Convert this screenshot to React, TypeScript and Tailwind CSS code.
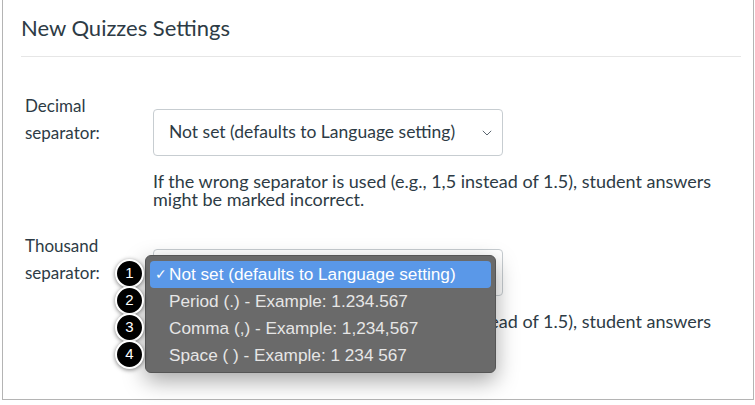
import React from "react";

const Chevron = () => (
  <svg width="10" height="6" viewBox="0 0 10 6" fill="none">
    <path d="M0.8 0.8 L5 5 L9.2 0.8" stroke="#5b6670" strokeWidth="1" />
  </svg>
);

const Select = ({ text }: { text: string }) => (
  <div className="flex h-[47px] w-[350px] items-center justify-between rounded-[4px] border border-[#c7cdd1] bg-white pl-[15px] pr-[10px]">
    <span className="text-[17.5px] text-[#2d3b45]">{text}</span>
    <Chevron />
  </div>
);

const Row = ({ first, second, mt }: { first: string; second: string; mt: string }) => (
  <div className={mt}>
    <div className="flex">
      <div className="w-[132px] pl-[4px] text-[17px] leading-[27px] text-[#2d3b45]">
        <div>{first}</div>
        <div>{second}</div>
      </div>
      <div className="pt-[17px]">
        <Select text="Not set (defaults to Language setting)" />
        <p className="mt-[16px] whitespace-nowrap text-[18px] leading-[18px] text-[#2d3b45]">
          If the wrong separator is used (e.g., 1,5 instead of 1.5), student answers
          <br />
          might be marked incorrect.
        </p>
      </div>
    </div>
  </div>
);

const items = [
  "Not set (defaults to Language setting)",
  "Period (.) - Example: 1.234.567",
  "Comma (,) - Example: 1,234,567",
  "Space ( ) - Example: 1 234 567",
];

export default function App() {
  return (
    <div className="relative h-[405px] w-[755px] overflow-hidden bg-white font-['Lato',sans-serif]">
      <div className="ml-[2px] h-[400px] w-[752px] border-b border-l border-r border-[#b4b4b4] pl-[18px] pr-[12px]">
        <h1 className="pt-[14px] text-[22px] font-normal leading-[28px] text-[#2d3b45]">New Quizzes Settings</h1>
        <div className="mt-[14px] h-px bg-[#e6e6e6]" />
        <div className="flex flex-col">
          <Row first="Decimal" second="separator:" mt="mt-[35px]" />
          <Row first="Thousand" second="separator:" mt="mt-[24px]" />
        </div>
      </div>

      <div className="absolute left-[145px] top-[255px] h-[118px] w-[351px] rounded-[6px] border border-[#555] bg-[#6a6a6a] px-[4px] pt-[5px] shadow-[0_8px_22px_rgba(0,0,0,0.35)] font-['Liberation_Sans',Arial,sans-serif]">
        {items.map((t, i) => (
          <div
            key={t}
            className={`flex h-[27px] items-center rounded-[4px] text-[17.2px] ${
              i === 0 ? "bg-[#5a98e8] text-white" : "text-[#e6e6e6]"
            }`}
          >
            <span className="w-[19px] pl-[5px] text-[14px]">{i === 0 ? "✓" : ""}</span>
            <span>{t}</span>
          </div>
        ))}
      </div>

      {[0, 1, 2, 3].map((i) => (
        <div
          key={i}
          className="absolute left-[115px] flex h-[29px] w-[29px] items-center justify-center rounded-full border-2 border-white bg-black text-[15px] text-white shadow-[0_1px_4px_rgba(0,0,0,0.5)] font-['Liberation_Sans',Arial,sans-serif]"
          style={{ top: 259 + i * 27 }}
        >
          {i + 1}
        </div>
      ))}
    </div>
  );
}
